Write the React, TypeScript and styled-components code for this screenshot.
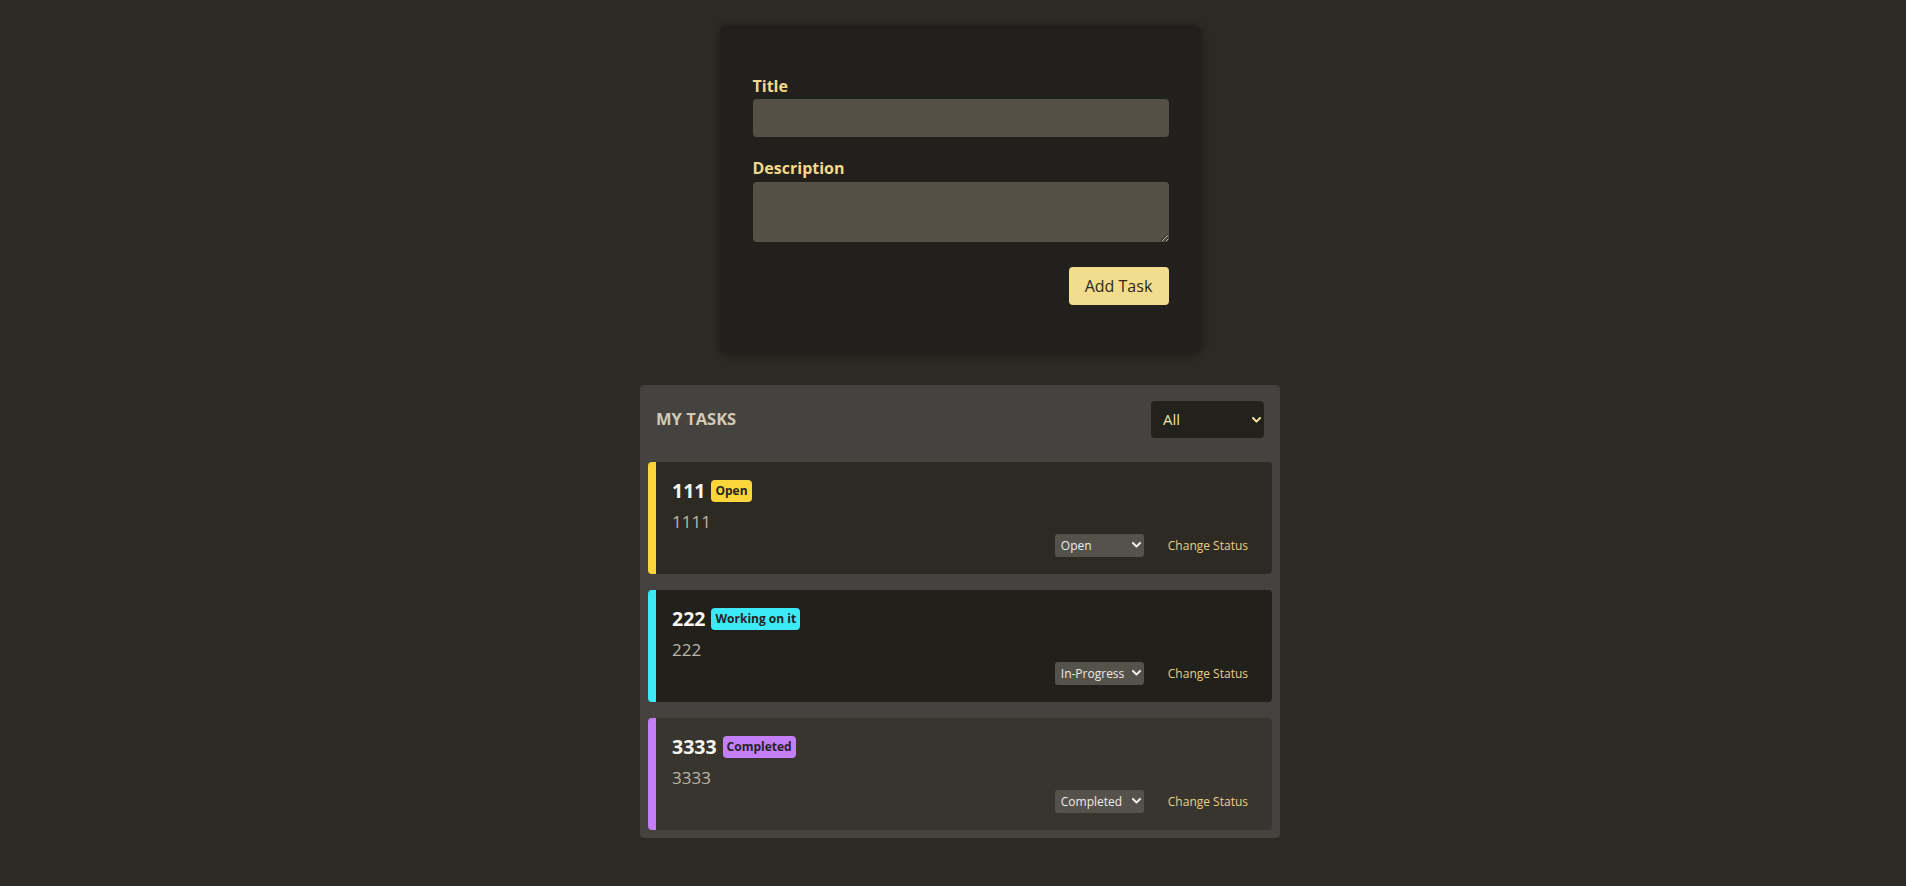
import React from "react";
import styled, { createGlobalStyle } from "styled-components";

const GlobalStyle = createGlobalStyle`
  html, body { margin: 0; padding: 0; }
  body {
    background: #2d2a24;
    font-family: "Open Sans", "Noto Sans", sans-serif;
  }
  * { box-sizing: border-box; }
`;

const Page = styled.div`
  display: flex;
  flex-direction: column;
  align-items: center;
  padding: 25px 0 40px 14px;
  min-height: 886px;
`;

const FormCard = styled.form`
  width: 481px;
  padding: 50px 32px 48px 33px;
  background: #22201c;
  border-radius: 8px;
  box-shadow: 0 2px 10px rgba(0, 0, 0, 0.35);
  display: flex;
  flex-direction: column;
`;

const Label = styled.label`
  display: block;
  font-size: 16px;
  font-weight: 700;
  color: #f2d98b;
  margin-bottom: 2px;
`;

const Field = styled.div<{ $gap?: number }>`
  display: flex;
  flex-direction: column;
  margin-top: ${(p) => p.$gap ?? 0}px;
`;

const TextInput = styled.input`
  width: 100%;
  height: 38px;
  border: none;
  border-radius: 4px;
  background: #545045;
  color: #f0eadb;
  font-family: inherit;
  font-size: 16px;
  padding: 0 10px;
  outline: none;
`;

const TextArea = styled.textarea`
  width: 100%;
  height: 60px;
  margin-top: 1px;
  border: none;
  border-radius: 4px;
  background: #545045;
  color: #f0eadb;
  font-family: inherit;
  font-size: 16px;
  padding: 8px 10px;
  outline: none;
  display: block;
`;

const ButtonRow = styled.div`
  display: flex;
  justify-content: flex-end;
  margin-top: 25px;
`;

const PrimaryButton = styled.button`
  width: 100px;
  height: 38px;
  border: none;
  border-radius: 4px;
  background: #f2dc8d;
  color: #2d2a24;
  font-family: inherit;
  font-size: 16px;
  padding: 0;
  cursor: pointer;
`;

const Panel = styled.section`
  width: 640px;
  margin-top: 32px;
  background: #454340;
  border-radius: 4px;
`;

const PanelHeader = styled.div`
  display: flex;
  justify-content: space-between;
  align-items: center;
  padding: 16px;
`;

const PanelTitle = styled.h2`
  margin: -2px 0 0;
  font-size: 16.5px;
  font-weight: 700;
  text-transform: uppercase;
  color: #d3cab5;
`;

const SelectWrap = styled.div`
  position: relative;
  display: inline-flex;
`;

const Chevron = styled.svg<{ $color: string }>`
  position: absolute;
  right: 3px;
  top: 50%;
  transform: translateY(-50%);
  width: 9px;
  height: 6px;
  pointer-events: none;
  stroke: ${(p) => p.$color};
`;

const FilterSelect = styled.select`
  appearance: none;
  width: 113px;
  height: 37px;
  border: none;
  border-radius: 4px;
  background: #23211c;
  color: #f3e2a6;
  font-family: inherit;
  font-size: 15px;
  padding: 0 12px 2px;
  outline: none;
`;

const TaskList = styled.div`
  display: flex;
  flex-direction: column;
  gap: 16px;
  padding: 8px;
`;

const TaskCard = styled.article<{ $accent: string; $bg: string }>`
  display: flex;
  flex-direction: column;
  background: ${(p) => p.$bg};
  border-left: 8px solid ${(p) => p.$accent};
  border-radius: 4px;
  padding: 16px 16px 17px 16px;
`;

const TitleRow = styled.div`
  display: flex;
  align-items: center;
  gap: 6px;
  height: 25px;
`;

const TaskTitle = styled.h3`
  margin: 0;
  font-size: 19.5px;
  font-weight: 700;
  color: #f7f5ef;
  line-height: 27px;
`;

const Badge = styled.span<{ $bg: string }>`
  display: inline-block;
  background: ${(p) => p.$bg};
  color: #26231e;
  font-size: 12px;
  font-weight: 700;
  padding: 3px 4px;
  border-radius: 4px;
  line-height: 16px;
`;

const TaskDesc = styled.p`
  margin: 7px 0 0;
  font-size: 17px;
  color: #bab5aa;
  line-height: 23px;
`;

const Actions = styled.div`
  display: flex;
  justify-content: flex-end;
  align-items: center;
  gap: 16px;
  height: 24px;
`;

const StatusSelect = styled.select`
  appearance: none;
  width: 89px;
  height: 23px;
  border: none;
  border-radius: 3px;
  background: #55524c;
  color: #ecebe6;
  font-family: inherit;
  font-size: 12px;
  padding: 0 6px;
  outline: none;
`;

const LinkButton = styled.button`
  background: none;
  border: none;
  color: #e9cf86;
  font-family: inherit;
  font-size: 12px;
  padding: 0 8px;
  cursor: pointer;
`;

const ChevronIcon = ({ color }: { color: string }) => (
  <Chevron $color={color} viewBox="0 0 9 6" fill="none" strokeWidth={2} strokeLinecap="round" strokeLinejoin="round">
    <path d="M1 1 L4.5 4.6 L8 1" />
  </Chevron>
);

type Task = {
  title: string;
  desc: string;
  status: string;
  badge: string;
  accent: string;
  bg: string;
};

const tasks: Task[] = [
  { title: "111", desc: "1111", status: "Open", badge: "Open", accent: "#fbd63b", bg: "#2d2a23" },
  { title: "222", desc: "222", status: "In-Progress", badge: "Working on it", accent: "#3ceaf6", bg: "#21201b" },
  { title: "3333", desc: "3333", status: "Completed", badge: "Completed", accent: "#c47ff6", bg: "#38352f" },
];

export default function App() {
  return (
    <>
      <GlobalStyle />
      <Page>
        <FormCard onSubmit={(e) => e.preventDefault()}>
          <Field>
            <Label htmlFor="title">Title</Label>
            <TextInput id="title" type="text" />
          </Field>
          <Field $gap={20}>
            <Label htmlFor="desc">Description</Label>
            <TextArea id="desc" />
          </Field>
          <ButtonRow>
            <PrimaryButton type="submit">Add Task</PrimaryButton>
          </ButtonRow>
        </FormCard>

        <Panel>
          <PanelHeader>
            <PanelTitle>My Tasks</PanelTitle>
            <SelectWrap>
              <FilterSelect defaultValue="All">
                <option>All</option>
                <option>Open</option>
                <option>In-Progress</option>
                <option>Completed</option>
              </FilterSelect>
              <ChevronIcon color="#f3e2a6" />
            </SelectWrap>
          </PanelHeader>
          <TaskList>
            {tasks.map((t) => (
              <TaskCard key={t.title} $accent={t.accent} $bg={t.bg}>
                <TitleRow>
                  <TaskTitle>{t.title}</TaskTitle>
                  <Badge $bg={t.accent}>{t.badge}</Badge>
                </TitleRow>
                <TaskDesc>{t.desc}</TaskDesc>
                <Actions>
                  <SelectWrap>
                    <StatusSelect defaultValue={t.status}>
                      <option>Open</option>
                      <option>In-Progress</option>
                      <option>Completed</option>
                    </StatusSelect>
                    <ChevronIcon color="#f2f2f0" />
                  </SelectWrap>
                  <LinkButton type="button">Change Status</LinkButton>
                </Actions>
              </TaskCard>
            ))}
          </TaskList>
        </Panel>
      </Page>
    </>
  );
}
